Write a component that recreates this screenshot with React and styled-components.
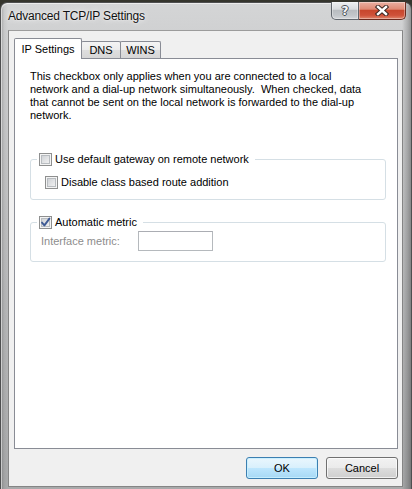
import React from 'react';
import styled, { createGlobalStyle } from 'styled-components';

const Global = createGlobalStyle`
  html, body { margin: 0; padding: 0; background: #35352d; }
  body {
    width: 412px; height: 489px; overflow: hidden;
    font-family: "Liberation Sans", Arial, sans-serif;
    font-size: 11px; color: #000;
  }
  #root { width: 412px; height: 489px; }
  * { box-sizing: border-box; }
`;

const Window = styled.div`
  width: 412px;
  height: 487px;
  margin-top: 2px;
  display: flex;
  flex-direction: column;
  border: 1px solid #4e4f50;
  border-bottom: none;
  border-radius: 7px 7px 0 0;
  background:
    linear-gradient(to right, rgba(0,0,0,0.22) 0, rgba(0,0,0,0.05) 3px, rgba(0,0,0,0) 7px,
      rgba(0,0,0,0) calc(100% - 9px), rgba(0,0,0,0.18) calc(100% - 3px), rgba(0,0,0,0.3) 100%),
    linear-gradient(to bottom, #d4d5d6 0, #d0d1d2 28px, #b9babb 60%, #a9aaab 100%);
  box-shadow: inset 1px 1px 0 rgba(255,255,255,0.55);
`;

const TitleBar = styled.div`
  flex: none;
  height: 27px;
  display: flex;
  align-items: flex-start;
  padding: 0 5px 0 7px;
`;

const Title = styled.div`
  flex: 1;
  align-self: center;
  margin-top: -1px;
  font-size: 12px;
  letter-spacing: -0.2px;
  color: #111;
  text-shadow: 0 0 6px rgba(255,255,255,0.95), 0 0 2px rgba(255,255,255,0.8);
`;

const CaptionButtons = styled.div`
  display: flex;
  margin-top: -1px;
`;

const CaptionButton = styled.div`
  height: 18px;
  width: ${p => p.$w}px;
  display: flex;
  align-items: center;
  justify-content: center;
  border: 1px solid ${p => (p.$close ? '#6b2a1e' : '#60666d')};
  border-top: none;
  border-left-width: ${p => (p.$close ? 0 : 1)}px;
  border-radius: ${p => (p.$close ? '0 0 5px 0' : '0 0 0 5px')};
  background: ${p =>
    p.$close
      ? 'linear-gradient(to bottom, #eab0a2 0%, #df8a75 42%, #c8472d 50%, #cf5139 78%, #e0866c 100%)'
      : 'linear-gradient(to bottom, #eef0f2 0%, #d9dcdf 42%, #b9bdc1 50%, #c2c6ca 78%, #d4d7da 100%)'};
  box-shadow: inset 0 0 0 1px rgba(255,255,255,0.35);
`;

const HelpGlyph = styled.span`
  font-family: "DejaVu Sans", sans-serif;
  font-weight: bold;
  font-size: 12px;
  line-height: 1;
  color: #f4f6f8;
  text-shadow: 1px 0 0 #4a5058, -1px 0 0 #4a5058, 0 1px 0 #4a5058, 0 -1px 0 #4a5058;
`;

const Client = styled.div`
  flex: 1;
  margin: 0 8px 2px 7px;
  border: 1px solid #858585;
  border-top-color: #9c9c9c;
  background: #f0f0f0;
  padding: 7px 4px 7px 5px;
  display: flex;
  flex-direction: column;
`;

const TabRow = styled.div`
  flex: none;
  height: 20px;
  display: flex;
  align-items: flex-end;
`;

const Tab = styled.div`
  width: ${p => p.$w}px;
  height: ${p => (p.$active ? 21 : 17)}px;
  margin-bottom: ${p => (p.$active ? -1 : 0)}px;
  position: relative;
  z-index: ${p => (p.$active ? 1 : 0)};
  display: flex;
  align-items: center;
  justify-content: center;
  border: 1px solid #898c95;
  border-bottom: none;
  border-radius: 2px 2px 0 0;
  background: ${p =>
    p.$active ? '#ffffff' : 'linear-gradient(to bottom, #f4f4f4 0%, #ececec 50%, #dedede 51%, #d6d6d6 100%)'};
  & + & { margin-left: -1px; }
`;

const Panel = styled.div`
  flex: 1;
  border: 1px solid #898c95;
  background: #ffffff;
  padding: 11px 11px 0 15px;
  display: flex;
  flex-direction: column;
`;

const Para = styled.p`
  margin: 0;
  line-height: 13px;
`;

const Group = styled.fieldset`
  margin: ${p => p.$mt}px 0 0 0;
  padding: 0;
  min-width: 0;
  border: 1px solid #d5dfe5;
  border-radius: 3px;
`;

const Legend = styled.legend`
  display: flex;
  height: 13px;
  margin-left: 6px;
  padding: 0 6px 0 2px;
  line-height: 13px;
`;

const Check = styled.label`
  display: flex;
  align-items: center;
  gap: 3px;
  height: 13px;
  line-height: 13px;
  color: ${p => (p.$disabled ? '#8f8f8f' : '#000')};
`;

const Box = styled.span`
  width: 13px;
  height: 13px;
  flex: none;
  display: inline-flex;
  align-items: center;
  justify-content: center;
  border: 1px solid #8e8f8f;
  background: linear-gradient(135deg, #c6cacf 0%, #e3e4e6 55%, #f7f7f7 100%);
  box-shadow: inset 0 0 0 1px #f4f4f4, inset 0 0 0 2px #b8bcc0;
`;

const GroupBody = styled.div`
  padding: ${p => p.$pad};
  display: flex;
  align-items: center;
`;

const FieldLabel = styled.span`
  width: 97px;
  flex: none;
  color: #8d8d8d;
  line-height: 13px;
`;

const TextInput = styled.div`
  width: 75px;
  height: 20px;
  border: 1px solid #b5b9bd;
  border-top-color: #abadb3;
  background: #ffffff;
`;

const ButtonRow = styled.div`
  flex: none;
  margin-top: 8px;
  display: flex;
  justify-content: flex-end;
  gap: 8px;
`;

const Button = styled.div`
  width: 72px;
  height: 22px;
  display: flex;
  align-items: center;
  justify-content: center;
  border-radius: 3px;
  border: 1px solid ${p => (p.$default ? '#3c7fb1' : '#707070')};
  background: ${p =>
    p.$default
      ? 'linear-gradient(to bottom, #eaf6fd 0%, #d9f0fc 48%, #bee6fd 50%, #a7d9f5 100%)'
      : 'linear-gradient(to bottom, #f2f2f2 0%, #ebebeb 48%, #dddddd 50%, #cfcfcf 100%)'};
  box-shadow: inset 0 0 0 1px ${p => (p.$default ? 'rgba(200,240,255,0.9)' : 'rgba(255,255,255,0.7)')};
  color: #000;
`;

function Checkbox({ checked, children }) {
  return (
    <Check>
      <Box>
        {checked && (
          <svg width="11" height="11" viewBox="0 0 11 11">
            <path d="M2 5.6 L4.4 8.4 L9.4 1.6" fill="none" stroke="#3e5a94" strokeWidth="1.9" strokeLinecap="round" strokeLinejoin="round" />
          </svg>
        )}
      </Box>
      <span>{children}</span>
    </Check>
  );
}

export default function App() {
  return (
    <>
      <Global />
      <Window>
        <TitleBar>
          <Title>Advanced TCP/IP Settings</Title>
          <CaptionButtons>
            <CaptionButton $w={28}>
              <HelpGlyph>?</HelpGlyph>
            </CaptionButton>
            <CaptionButton $w={47} $close>
              <svg width="14" height="11" viewBox="0 0 14 11">
                <path d="M3 2 L11 9 M11 2 L3 9" stroke="#3a2622" strokeWidth="4.4" strokeLinecap="square" />
                <path d="M3 2 L11 9 M11 2 L3 9" stroke="#ffffff" strokeWidth="2.4" strokeLinecap="square" />
              </svg>
            </CaptionButton>
          </CaptionButtons>
        </TitleBar>
        <Client>
          <TabRow>
            <Tab $active $w={68}>IP Settings</Tab>
            <Tab $w={40}>DNS</Tab>
            <Tab $w={41}>WINS</Tab>
          </TabRow>
          <Panel>
            <Para>
              This checkbox only applies when you are connected to a local<br />
              network and a dial-up network simultaneously.{'\u00a0'} When checked, data<br />
              that cannot be sent on the local network is forwarded to the dial-up<br />
              network.
            </Para>
            <Group $mt={31}>
              <Legend>
                <Checkbox>Use default gateway on remote network</Checkbox>
              </Legend>
              <GroupBody $pad="10px 14px 10px">
                <Checkbox>Disable class based route addition</Checkbox>
              </GroupBody>
            </Group>
            <Group $mt={16}>
              <Legend>
                <Checkbox checked>Automatic metric</Checkbox>
              </Legend>
              <GroupBody $pad="2px 10px 10px">
                <FieldLabel>Interface metric:</FieldLabel>
                <TextInput />
              </GroupBody>
            </Group>
          </Panel>
          <ButtonRow>
            <Button $default>OK</Button>
            <Button>Cancel</Button>
          </ButtonRow>
        </Client>
      </Window>
    </>
  );
}
